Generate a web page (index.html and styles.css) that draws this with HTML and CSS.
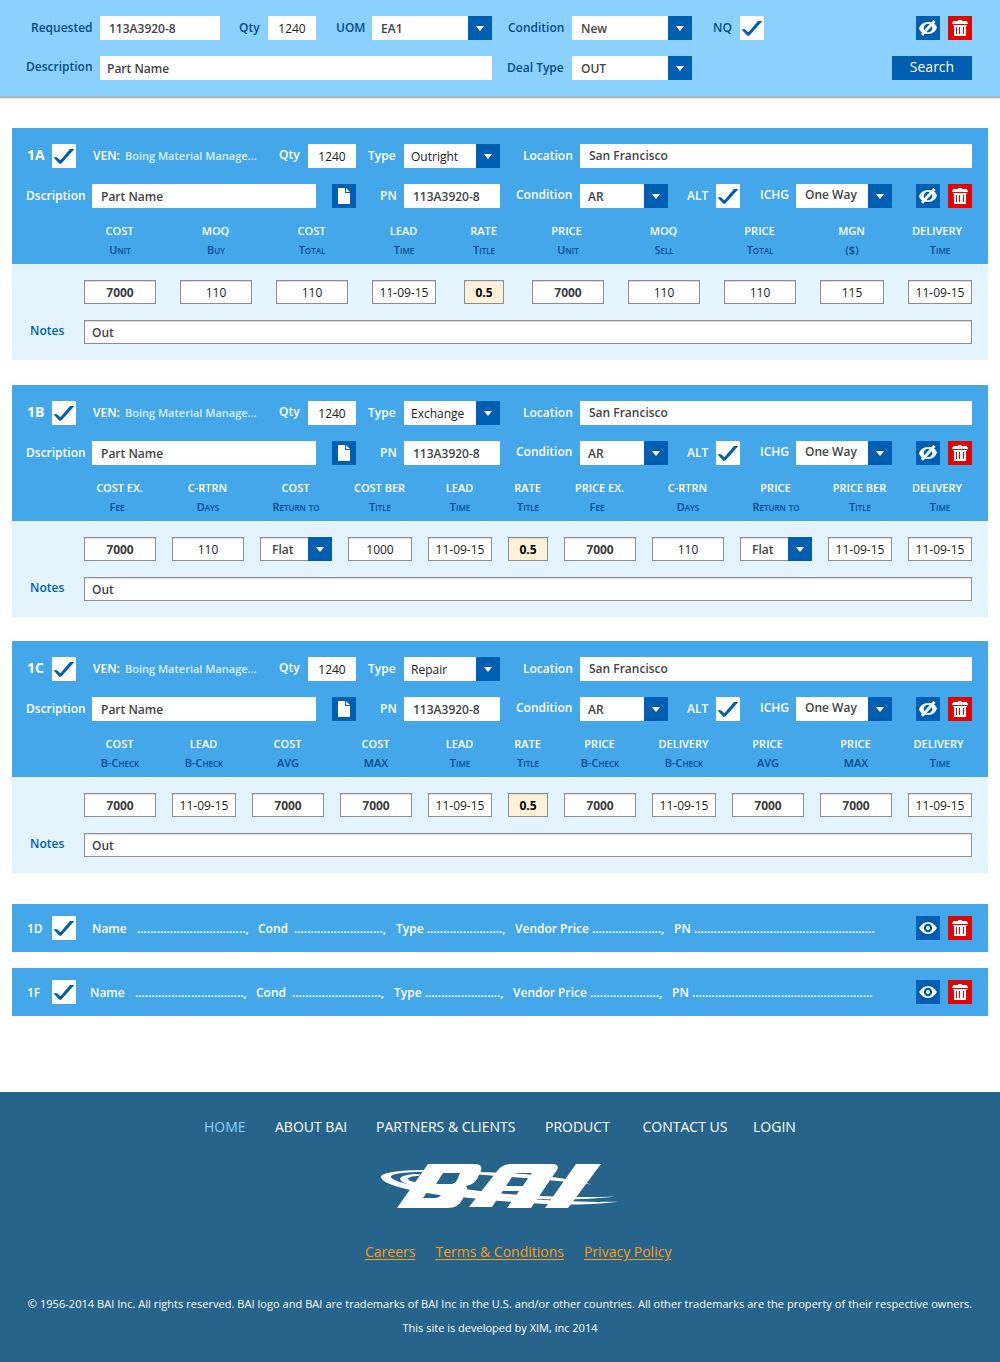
FILE: index.html
```html
<!DOCTYPE html>
<html lang="en">
<head>
<meta charset="utf-8">
<title>BAI Quotes</title>
<link rel="stylesheet" href="styles.css">
</head>
<body>
<svg class="sprite" aria-hidden="true">
  <symbol id="check" viewBox="0 0 24 24"><path d="M1.300 13.200H5L8.400 16.200L18 5H22.400L9.200 19.700H7.500Z" fill="#005eb0"/></symbol>
  <symbol id="arrow" viewBox="0 0 24 24"><path d="M8 10H16L12 15Z" fill="#fff"/></symbol>
  <symbol id="doc" viewBox="0 0 24 24"><path d="M6 4.500Q6 4 6.500 4H13V9H18V19.500Q18 20 17.500 20H6.500Q6 20 6 19.500Z" fill="#fff"/><path d="M14 4L18 8H14Z" fill="#fff"/></symbol>
  <symbol id="eye" viewBox="0 0 24 24"><path d="M3 12Q7 6 12 6T21 12Q17 18 12 18T3 12Z" fill="#fff"/><circle cx="12" cy="12" r="4.200" fill="#005eb0"/><circle cx="12" cy="12" r="2" fill="#fff"/></symbol>
  <symbol id="hide" viewBox="0 0 24 24"><path d="M3 12.500Q5 6 12 6T21 11.500Q19 18 12 18T3 12.500Z" fill="#fff"/><circle cx="12" cy="12" r="4.300" fill="#005eb0"/><path d="M6 18.800L18.500 5" stroke="#fff" stroke-width="2.800"/></symbol>
  <symbol id="trash" viewBox="0 0 24 24"><path d="M10 4H14V5H19V6L20 7V8H4V7L5 6V5H10ZM5 9H19V10H18V20H6V10H5ZM8 11V18H9V11ZM11 11V18H12V11ZM15 11V18H16V11Z" fill="#fff" fill-rule="evenodd"/></symbol>
</svg>

<header class="search-bar">
  <div class="row search-top">
    <label class="label">Requested</label><span class="field">113A3920-8</span>
    <label class="label">Qty</label><span class="field center">1240</span>
    <label class="label">UOM</label><span class="select">EA1<svg><use href="#arrow"/></svg></span>
    <label class="label">Condition</label><span class="select">New<svg><use href="#arrow"/></svg></span>
    <label class="label">NQ</label><svg class="check"><use href="#check"/></svg>
    <div class="actions"><svg class="blue"><use href="#hide"/></svg><svg class="red"><use href="#trash"/></svg></div>
  </div>
  <div class="row search-bottom">
    <label class="label raised">Description</label><span class="field snug">Part Name</span>
    <label class="label">Deal Type</label><span class="select">OUT<svg><use href="#arrow"/></svg></span>
    <button class="search-button">Search</button>
  </div>
</header>

<main class="quotes">
  <section class="card">
    <div class="card-head">
      <div class="row vendor">
        <strong class="code">1A</strong><svg class="check"><use href="#check"/></svg>
        <span class="label">VEN:</span><span class="vendor-name">Boing Material Manage...</span>
        <label class="label raised">Qty</label><span class="field center">1240</span>
        <label class="label">Type</label><span class="select light">Outright<svg><use href="#arrow"/></svg></span>
        <label class="label">Location</label><span class="field lifted">San Francisco</span>
      </div>
      <div class="row part">
        <label class="label">Dscription</label><span class="field">Part Name</span>
        <svg class="blue"><use href="#doc"/></svg>
        <label class="label">PN</label><span class="field">113A3920-8</span>
        <label class="label raised">Condition</label><span class="select tight">AR<svg><use href="#arrow"/></svg></span>
        <label class="label">ALT</label><svg class="check"><use href="#check"/></svg>
        <label class="label raised">ICHG</label><span class="select raised">One Way<svg><use href="#arrow"/></svg></span>
        <div class="actions"><svg class="blue"><use href="#hide"/></svg><svg class="red"><use href="#trash"/></svg></div>
      </div>
      <div class="columns outright headings">
        <div><b>COST</b><i>Unit</i></div><div><b>MOQ</b><i>Buy</i></div><div><b>COST</b><i>Total</i></div><div><b>LEAD</b><i>Time</i></div><div><b>RATE</b><i>Title</i></div><div><b class="nudge">PRICE</b><i>Unit</i></div><div><b>MOQ</b><i>Sell</i></div><div><b>PRICE</b><i>Total</i></div><div><b>MGN</b><i>($)</i></div><div><b class="nudge-more">DELIVERY</b><i>Time</i></div>
      </div>
    </div>
    <div class="card-body">
      <div class="columns outright">
        <span class="box strong">7000</span><span class="box">110</span><span class="box">110</span><span class="box">11-09-15</span><span class="box rate">0.5</span><span class="box strong">7000</span><span class="box">110</span><span class="box">110</span><span class="box">115</span><span class="box">11-09-15</span>
      </div>
      <div class="notes"><label class="label">Notes</label><span class="box">Out</span></div>
    </div>
  </section>

  <section class="card">
    <div class="card-head">
      <div class="row vendor">
        <strong class="code">1B</strong><svg class="check"><use href="#check"/></svg>
        <span class="label">VEN:</span><span class="vendor-name">Boing Material Manage...</span>
        <label class="label raised">Qty</label><span class="field center">1240</span>
        <label class="label">Type</label><span class="select light">Exchange<svg><use href="#arrow"/></svg></span>
        <label class="label">Location</label><span class="field lifted">San Francisco</span>
      </div>
      <div class="row part">
        <label class="label">Dscription</label><span class="field">Part Name</span>
        <svg class="blue"><use href="#doc"/></svg>
        <label class="label">PN</label><span class="field">113A3920-8</span>
        <label class="label raised">Condition</label><span class="select tight">AR<svg><use href="#arrow"/></svg></span>
        <label class="label">ALT</label><svg class="check"><use href="#check"/></svg>
        <label class="label raised">ICHG</label><span class="select raised">One Way<svg><use href="#arrow"/></svg></span>
        <div class="actions"><svg class="blue"><use href="#hide"/></svg><svg class="red"><use href="#trash"/></svg></div>
      </div>
      <div class="columns exchange headings">
        <div><b>COST EX.</b><i class="nudge-more">Fee</i></div><div><b>C-RTRN</b><i>Days</i></div><div><b>COST</b><i>Return to</i></div><div><b>COST BER</b><i>Title</i></div><div><b>LEAD</b><i>Time</i></div><div><b>RATE</b><i>Title</i></div><div><b>PRICE EX.</b><i class="nudge-more">Fee</i></div><div><b>C-RTRN</b><i>Days</i></div><div><b>PRICE</b><i>Return to</i></div><div><b>PRICE BER</b><i>Title</i></div><div><b class="nudge-more">DELIVERY</b><i>Time</i></div>
      </div>
    </div>
    <div class="card-body">
      <div class="columns exchange">
        <span class="box strong">7000</span><span class="box">110</span><span class="box dropdown">Flat<svg><use href="#arrow"/></svg></span><span class="box">1000</span><span class="box">11-09-15</span><span class="box rate">0.5</span><span class="box strong">7000</span><span class="box">110</span><span class="box dropdown">Flat<svg><use href="#arrow"/></svg></span><span class="box">11-09-15</span><span class="box">11-09-15</span>
      </div>
      <div class="notes"><label class="label">Notes</label><span class="box">Out</span></div>
    </div>
  </section>

  <section class="card">
    <div class="card-head">
      <div class="row vendor">
        <strong class="code">1C</strong><svg class="check"><use href="#check"/></svg>
        <span class="label">VEN:</span><span class="vendor-name">Boing Material Manage...</span>
        <label class="label raised">Qty</label><span class="field center">1240</span>
        <label class="label">Type</label><span class="select light">Repair<svg><use href="#arrow"/></svg></span>
        <label class="label">Location</label><span class="field lifted">San Francisco</span>
      </div>
      <div class="row part">
        <label class="label">Dscription</label><span class="field">Part Name</span>
        <svg class="blue"><use href="#doc"/></svg>
        <label class="label">PN</label><span class="field">113A3920-8</span>
        <label class="label raised">Condition</label><span class="select tight">AR<svg><use href="#arrow"/></svg></span>
        <label class="label">ALT</label><svg class="check"><use href="#check"/></svg>
        <label class="label raised">ICHG</label><span class="select raised">One Way<svg><use href="#arrow"/></svg></span>
        <div class="actions"><svg class="blue"><use href="#hide"/></svg><svg class="red"><use href="#trash"/></svg></div>
      </div>
      <div class="columns repair headings">
        <div><b>COST</b><i>B-Check</i></div><div><b>LEAD</b><i>B-Check</i></div><div><b>COST</b><i>AVG</i></div><div><b>COST</b><i>MAX</i></div><div><b>LEAD</b><i>Time</i></div><div><b>RATE</b><i>Title</i></div><div><b>PRICE</b><i>B-Check</i></div><div><b>DELIVERY</b><i>B-Check</i></div><div><b>PRICE</b><i>AVG</i></div><div><b>PRICE</b><i>MAX</i></div><div><b class="nudge">DELIVERY</b><i>Time</i></div>
      </div>
    </div>
    <div class="card-body">
      <div class="columns repair">
        <span class="box strong">7000</span><span class="box">11-09-15</span><span class="box strong">7000</span><span class="box strong">7000</span><span class="box">11-09-15</span><span class="box rate">0.5</span><span class="box strong">7000</span><span class="box">11-09-15</span><span class="box strong">7000</span><span class="box strong">7000</span><span class="box">11-09-15</span>
      </div>
      <div class="notes"><label class="label">Notes</label><span class="box">Out</span></div>
    </div>
  </section>

  <section class="summary">
    <span class="code">1D</span><svg class="check"><use href="#check"/></svg>
    <div class="facts"><span>Name</span><span>.................................,</span><span>Cond</span><span>...........................,</span><span>Type .......................,</span><span>Vendor Price .....................,</span><span>PN .......................................................</span></div>
    <div class="actions"><svg class="blue"><use href="#eye"/></svg><svg class="red"><use href="#trash"/></svg></div>
  </section>
  <section class="summary shifted">
    <span class="code">1F</span><svg class="check"><use href="#check"/></svg>
    <div class="facts"><span>Name</span><span>.................................,</span><span>Cond</span><span>...........................,</span><span>Type .......................,</span><span>Vendor Price .....................,</span><span>PN .......................................................</span></div>
    <div class="actions"><svg class="blue"><use href="#eye"/></svg><svg class="red"><use href="#trash"/></svg></div>
  </section>
</main>

<footer class="footer">
  <nav class="nav"><a class="active">HOME</a><a>ABOUT BAI</a><a>PARTNERS &amp; CLIENTS</a><a>PRODUCT</a><a>CONTACT US</a><a>LOGIN</a></nav>
  <svg class="logo" viewBox="0 0 260 70" role="img" aria-label="BAI">
    <g fill="#fff">
      <path d="M54 20C28 20 11 23 11 27C11 34 40 41 70 45L110 49C160 54 216 57 248 51.500C216 53 160 50 114 45L74 40C50 37 22 32 21 27C20 24 34 22 52 22Z"/>
      <path d="M50 24C38 24 30 26 30 29C31 35 55 38 76 41L120 46C160 50 210 51 245 46.500C210 48 160 46 124 43L80 37C58 35 38 32 38 29C38 27 42 26 49 26Z"/>
      <path d="M108 22Q165 23 207 31L222 34.500Q175 29 108 24.500Z"/>
      <path fill-rule="evenodd" d="M58 14H105Q113 14 111 21L107 29Q105 34 96 36Q98 38 96 43L92 50Q88 58 78 58H27ZM73 23L66 34H81Q85 34 87 30L90 23ZM59 39L53 48H66Q69 48 71 45L73 39Z"/>
      <path d="M99 57L128 20Q133 14 141 14H182Q190 14 187 20L161 58H137L162 23H147Q144 23 142 27L122 57Z"/>
      <path d="M136 36H153L150 41H132Z"/>
      <path d="M206 14H231L198 58H175Z"/>
    </g>
  </svg>
  <div class="links"><a>Careers</a><a>Terms &amp; Conditions</a><a>Privacy Policy</a></div>
  <p class="copyright">© 1956-2014 BAI Inc. All rights reserved. BAI logo and BAI are trademarks of BAI Inc in the U.S. and/or other countries. All other trademarks are the property of their respective owners.</p>
  <p>This site is developed by XIM, inc 2014</p>
</footer>
</body>
</html>
```
FILE: styles.css
```css
* { box-sizing: border-box; }
body { margin: 0; background: #fff; font: 600 12px/24px "Open Sans", sans-serif; color: #3c3c3c; }
svg { display: block; width: 24px; height: 24px; flex: none; }
.sprite { display: none; }
.blue { background: #005eb0; }
.red { background: #e30600; }
.check { background: #fff; }
.actions { display: flex; gap: 8px; margin-left: auto; }

.row { display: grid; height: 24px; white-space: nowrap; }
.label { line-height: 24px; height: 24px; }
.label.raised { line-height: 22px; }
.field, .select { background: #fff; padding-left: 9px; height: 24px; line-height: 26px; color: #444; }
.field.center { padding: 0; text-align: center; font-weight: 400; color: #222; }
.field.snug { padding-left: 7px; }
.field.lifted { line-height: 24px; }
.select { display: flex; justify-content: space-between; }
.select svg, .dropdown svg { background: #005eb0; }
.select.light { padding-left: 7px; font-weight: 400; color: #222; }
.select.tight { padding-left: 8px; }
.select.raised { line-height: 22px; }

.search-bar { height: 99px; padding: 16px 28px 0 26px; background: #8bd1ff; border-bottom: 1px solid #e8e8e8; box-shadow: inset 0 -2px #b5b5b5; }
.search-bar .label { color: #024a8d; }
.search-top { grid-template-columns: 69px 139px 29px 68px 36px 136px 64px 141px 27px 24px 1fr; padding-left: 5px; margin-bottom: 16px; }
.search-top .field:nth-child(2) { width: 120px; }
.search-top .field:nth-child(4) { width: 48px; }
.search-top .select { width: 120px; }
.search-bottom { grid-template-columns: 74px 407px 65px 120px 1fr; }
.search-bottom .field { width: 392px; }
.search-button { justify-self: end; width: 80px; height: 24px; padding: 0 0 2px; border: 0; background: #005eb0; color: #fff; font: 400 14px/22px "Open Sans", sans-serif; }

.quotes { padding: 29px 12px 0; height: 993px; }
.card { height: 232px; margin-bottom: 25px; background: #e3f4ff; }
.card + .card { margin-bottom: 24px; }
.card + .card + .card { margin-bottom: 31px; }
.card-head { height: 136px; padding: 16px 16px 0 14px; background: #43a7e9; color: #fff; }
.code { font-size: 14px; line-height: 22px; }
strong.code { font-weight: 700; }
.vendor { padding-left: 1px; margin-bottom: 16px; grid-template-columns: 25px 41px 32px 154px 29px 60px 36px 119px 57px 392px; }
.vendor-name { font-size: 11px; line-height: 24px; color: #d9efff; }
.vendor .field.center { width: 48px; }
.vendor .select { width: 96px; }
.part { grid-template-columns: 66px 240px 48px 24px 112px 64px 107px 29px 44px 36px 96px 1fr; }
.part .field:nth-child(2) { width: 224px; }
.part .field:nth-child(5) { width: 96px; }
.part .select.tight { width: 88px; }

.columns { display: grid; padding-left: 72px; }
.outright { grid-template-columns: 96px 96px 96px 92px 68px 96px 96px 96px 88px 64px; }
.outright > * { width: 72px; }
.outright > :nth-child(4), .outright > :nth-child(9), .outright > :nth-child(10) { width: 64px; }
.outright > :nth-child(5) { width: 40px; }
.exchange { column-gap: 16px; grid-template-columns: 72px 72px 72px 64px 64px 40px 72px 72px 72px 64px 64px; }
.repair { column-gap: 16px; grid-template-columns: 72px 64px 72px 72px 64px 40px 72px 64px 72px 72px 64px; }
.headings { padding-left: 58px; padding-top: 14px; white-space: nowrap; }
.headings div { display: flex; flex-direction: column; align-items: center; }
.headings b { margin-right: 1px; font-size: 11px; line-height: 18px; font-weight: 600; }
.headings i { font: 600 11px/20px "Open Sans", sans-serif; font-variant: small-caps; color: #074a8c; }
.headings .nudge { margin-right: 3px; }
.headings .nudge-more { margin-right: 6px; }

.card-body { padding: 16px 16px 0 0; }
.box { height: 24px; border: 1px solid #8d8d8d; background: #fff; box-shadow: inset 0 1px #ddd; text-align: center; line-height: 24px; font-weight: 400; color: #222; }
.box.strong { font-weight: 700; color: #3c3c3c; }
.box.rate { background: #fff0d9; color: #000; font-weight: 700; }
.box.dropdown { display: flex; justify-content: space-between; padding-left: 11px; font-weight: 600; color: #444; }
.dropdown svg { margin: -1px -1px 0 0; }
.notes { display: grid; grid-template-columns: 54px 888px; margin: 16px 0 0 18px; }
.notes .label { color: #005eb0; line-height: 22px; }
.notes .box { text-align: left; padding-left: 7px; font-weight: 600; color: #444; }

.summary { display: flex; height: 48px; margin-bottom: 16px; padding: 12px 16px 0 15px; background: #43a7e9; color: #fff; white-space: pre; }
.summary .code { width: 25px; font-size: 12px; line-height: 26px; }
.facts { display: grid; margin-left: 16px; grid-template-columns: 45px 121px 36px 102px 119px 159px 202px; line-height: 26px; }
.shifted .facts { margin-left: 14px; }

.footer { height: 270px; padding-top: 23px; background: #27648b; color: #fff; text-align: center; font-weight: 400; }
.nav { display: grid; grid-template-columns: 71px 101px 169px 97.5px 110.5px 60px; padding-left: 204px; text-align: left; font-size: 14px; white-space: nowrap; }
.active { color: #8bd1ff; }
.logo { width: 260px; height: 70px; margin: 11px 0 0 370px; }
.links { display: flex; gap: 20px; margin: 20px 0 28px 365px; font-size: 14px; color: #ff9c10; }
.links a { text-decoration: underline; text-underline-offset: 2px; }
.footer p { margin: 0; font-size: 11px; white-space: nowrap; }
.footer .copyright { letter-spacing: 0.045px; }
```
